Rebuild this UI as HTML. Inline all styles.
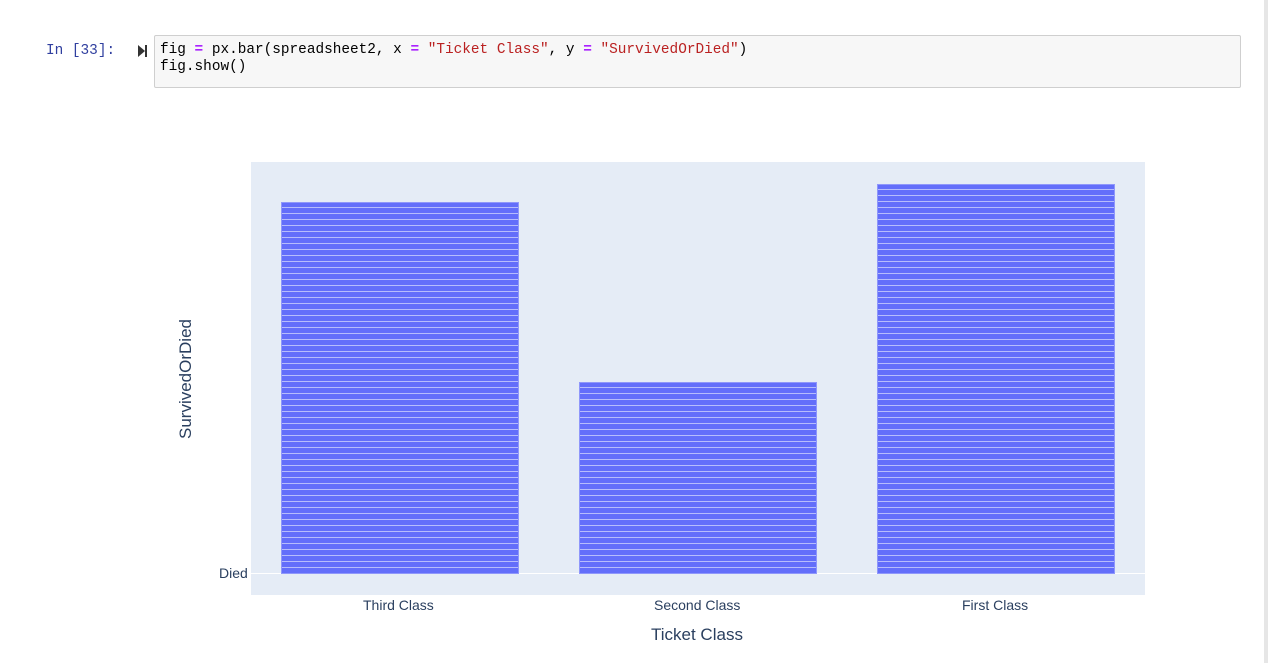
<!DOCTYPE html><html><head><style>
body{margin:0;width:1268px;height:663px;background:#fff;position:relative;overflow:hidden;font-family:"Liberation Sans",sans-serif}
.a{position:absolute}
.code{left:154px;top:35px;width:1085px;height:51px;background:#f7f7f7;border:1px solid #cfcfcf;border-radius:2px}
.mono{font-family:"Liberation Mono","DejaVu Sans Mono",monospace;font-size:14.4px;line-height:17px}
.bar{background:repeating-linear-gradient(to top,#636efa 0,#636efa 5px,#b6bcfc 5px,#b6bcfc 6px);border:1px solid #8f97fb;box-sizing:border-box}
.t{color:#2a3f5f;font-size:14px}
</style></head><body>
<div class="a" style="left:1264px;top:0;width:4px;height:663px;background:#e6e6e6"></div>
<div class="a mono" style="left:46px;top:43px;color:#303f9f">In [33]:</div>
<div class="a" style="left:138px;top:45px;width:0;height:0;border-left:7px solid #333;border-top:6px solid transparent;border-bottom:6px solid transparent"></div>
<div class="a" style="left:145px;top:45px;width:2px;height:12px;background:#333"></div>
<div class="a code"></div>
<div class="a mono" style="left:160px;top:42px;color:#000;white-space:pre">fig <b style="color:#aa22ff">=</b> px.bar(spreadsheet2, x <b style="color:#aa22ff">=</b> <span style="color:#ba2121">"Ticket Class"</span>, y <b style="color:#aa22ff">=</b> <span style="color:#ba2121">"SurvivedOrDied"</span>)
fig.show()</div>
<div class="a" style="left:251px;top:162px;width:894px;height:433px;background:#e5ecf6"></div>
<div class="a" style="left:251px;top:573px;width:894px;height:1px;background:#fff"></div>
<div class="a bar" style="left:281px;top:202px;width:238px;height:372px"></div>
<div class="a bar" style="left:579px;top:382px;width:238px;height:192px"></div>
<div class="a bar" style="left:877px;top:184px;width:238px;height:390px"></div>
<div class="a t" style="left:219px;top:565px">Died</div>
<div class="a t" style="left:363px;top:597px">Third Class</div>
<div class="a t" style="left:654px;top:597px">Second Class</div>
<div class="a t" style="left:962px;top:597px">First Class</div>
<div class="a t" style="left:651px;top:625px;font-size:17px">Ticket Class</div>
<div class="a t" style="left:186px;top:379px;font-size:17px;transform:translate(-50%,-50%) rotate(-90deg);white-space:nowrap">SurvivedOrDied</div>
</body></html>
